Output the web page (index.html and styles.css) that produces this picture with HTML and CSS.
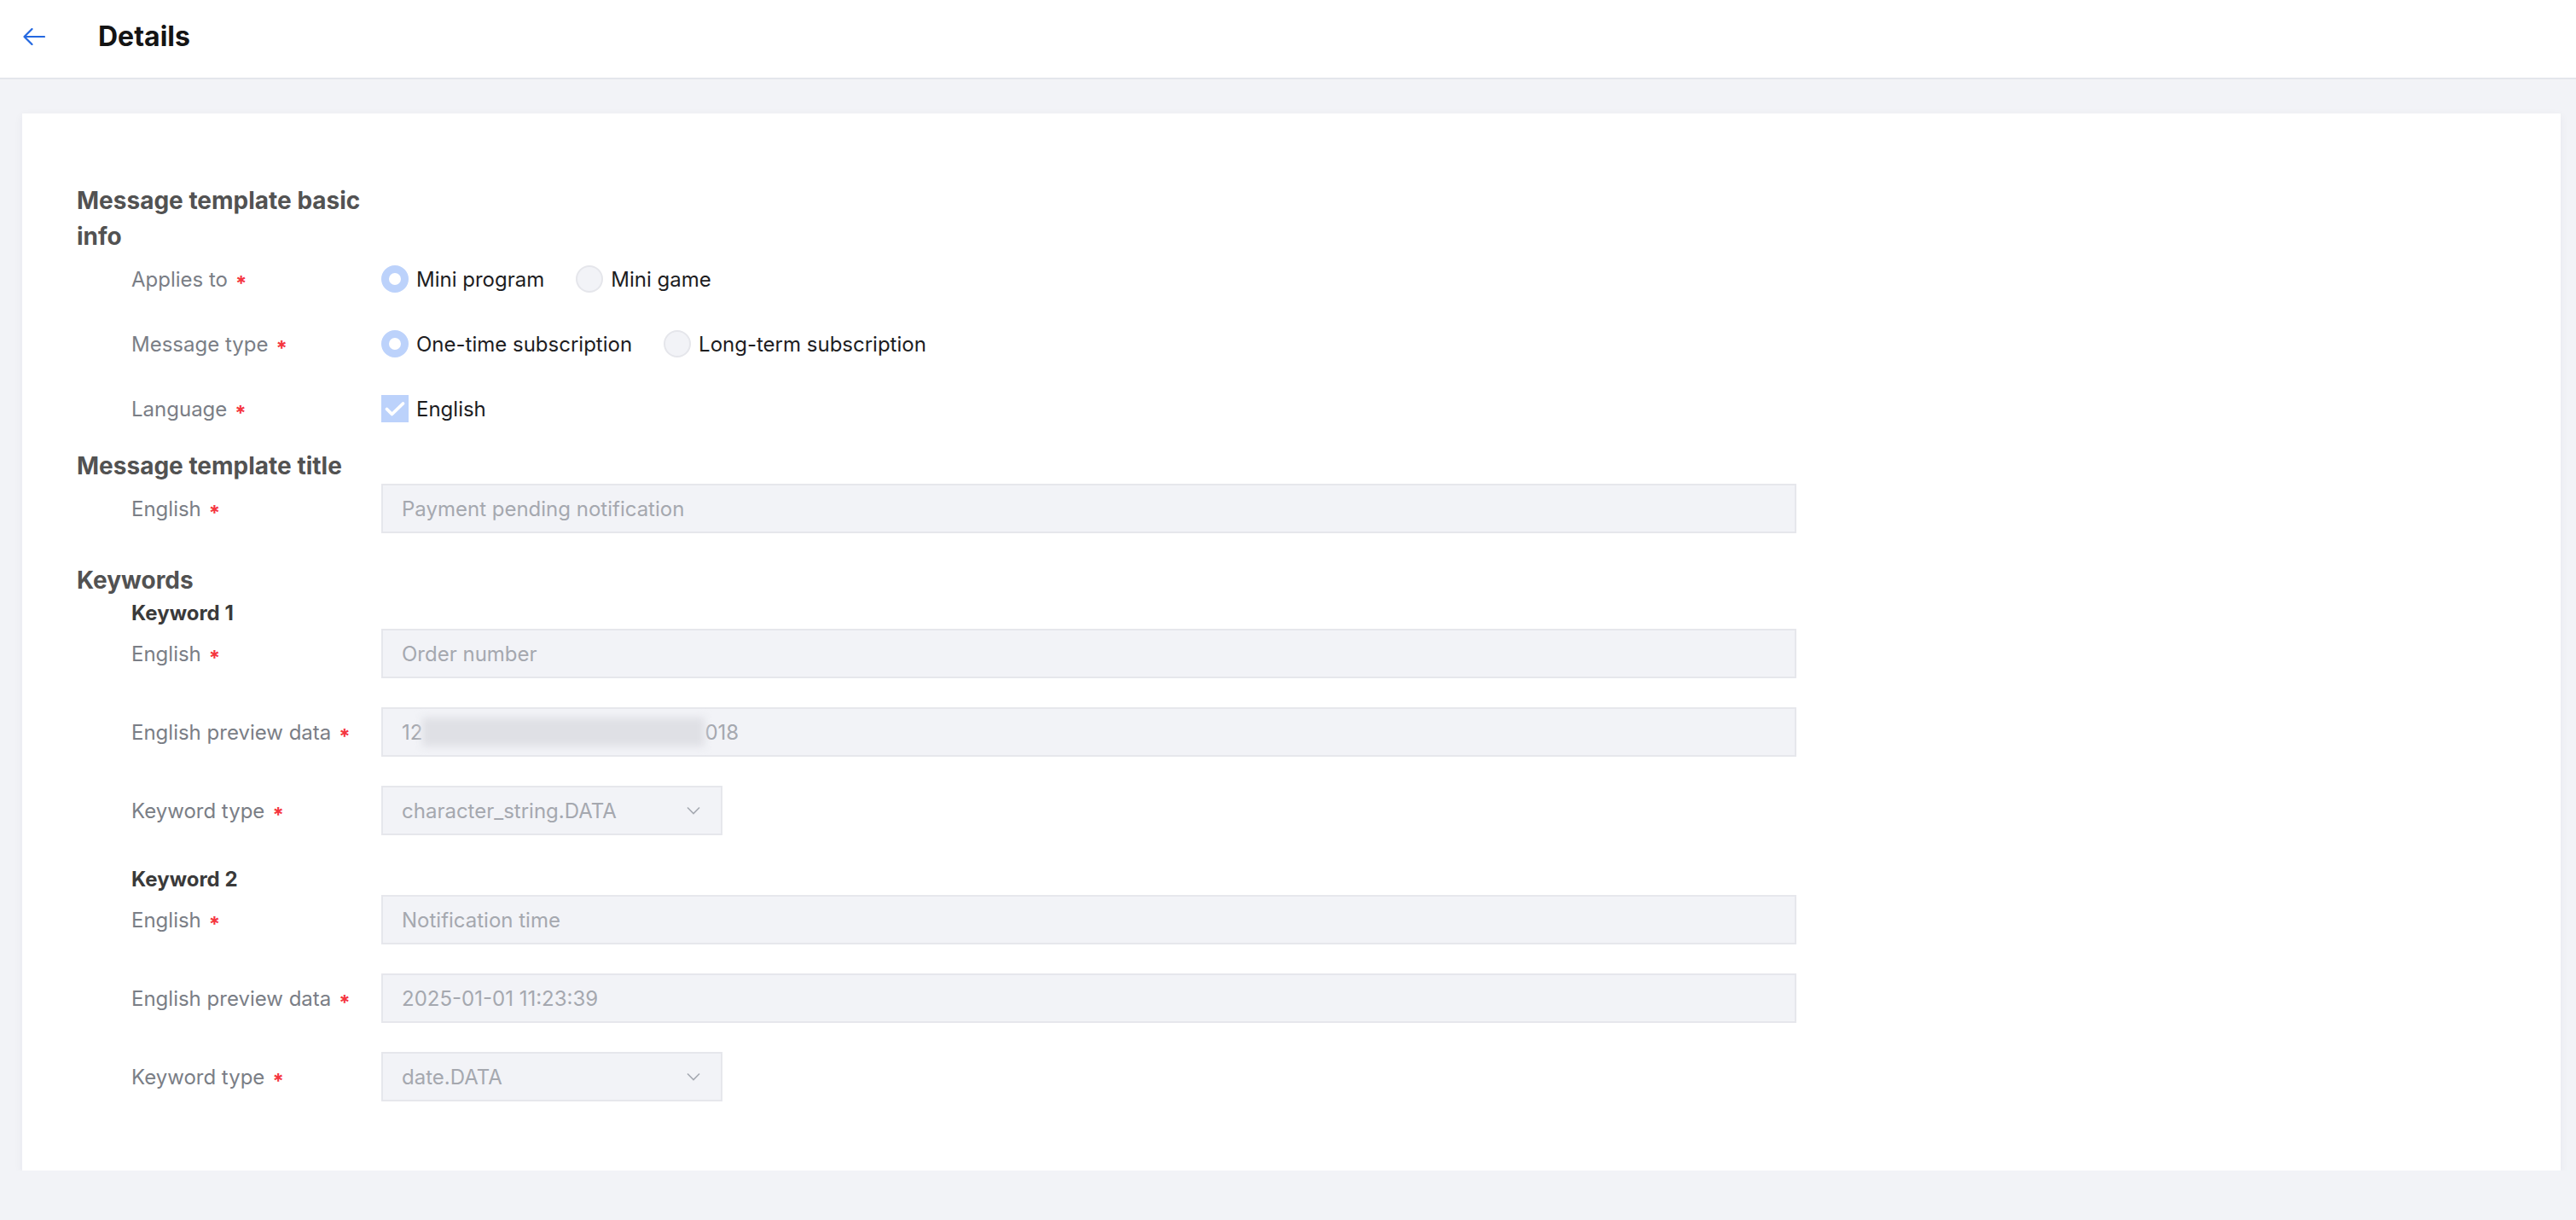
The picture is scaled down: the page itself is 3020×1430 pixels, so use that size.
FILE: index.html
```html
<!DOCTYPE html>
<html lang="en">
<head>
  <meta charset="UTF-8" />
  <title>Details</title>
  <meta name="viewport" content="width=device-width, initial-scale=1.0">
  <link rel="stylesheet" href="styles.css">
</head>
<body>
  <header class="topbar">
    <a class="back" href="#">
      <svg width="26" height="20" viewBox="0 0 26 20"><path d="M1.5 10H25M10.5 1L1.5 10l9 9" fill="none" stroke="#2468e0" stroke-width="2.2" stroke-linecap="round" stroke-linejoin="round"/></svg>
    </a>
    <h1>Details</h1>
  </header>

  <main class="card">
    <h2 class="group-title first">Message template basic info</h2>
    <div class="field choice">
      <div class="field-label">Applies to<span class="req">*</span></div>
      <div class="options">
        <span class="radio"><i class="dot on"></i>Mini program</span>
        <span class="radio"><i class="dot"></i>Mini game</span>
      </div>
    </div>
    <div class="field choice">
      <div class="field-label">Message type<span class="req">*</span></div>
      <div class="options">
        <span class="radio"><i class="dot on"></i>One-time subscription</span>
        <span class="radio"><i class="dot"></i>Long-term subscription</span>
      </div>
    </div>
    <div class="field choice last">
      <div class="field-label">Language<span class="req">*</span></div>
      <div class="options">
        <span class="radio"><i class="box"><svg width="32" height="32" viewBox="0 0 32 32"><path d="M6.5 16.5l6 6L25.5 10" fill="none" stroke="#fff" stroke-width="3.8" stroke-linecap="round" stroke-linejoin="round"/></svg></i>English</span>
      </div>
    </div>

    <h2 class="group-title">Message template title</h2>
    <div class="field">
      <div class="field-label">English<span class="req">*</span></div>
      <div class="input">Payment pending notification</div>
    </div>

    <h2 class="group-title">Keywords</h2>
    <h3 class="sub-title">Keyword 1</h3>
    <div class="field">
      <div class="field-label">English<span class="req">*</span></div>
      <div class="input">Order number</div>
    </div>
    <div class="field">
      <div class="field-label">English preview data<span class="req">*</span></div>
      <div class="input">12<span class="masked"></span>018</div>
    </div>
    <div class="field">
      <div class="field-label">Keyword type<span class="req">*</span></div>
      <div class="input select">character_string.DATA
        <svg width="16" height="10" viewBox="0 0 16 10"><path d="M1 1.5l7 7 7-7" fill="none" stroke="#a5a9b1" stroke-width="1.6"/></svg>
      </div>
    </div>

    <h3 class="sub-title">Keyword 2</h3>
    <div class="field">
      <div class="field-label">English<span class="req">*</span></div>
      <div class="input">Notification time</div>
    </div>
    <div class="field">
      <div class="field-label">English preview data<span class="req">*</span></div>
      <div class="input">2025-01-01 11:23:39</div>
    </div>
    <div class="field">
      <div class="field-label">Keyword type<span class="req">*</span></div>
      <div class="input select">date.DATA
        <svg width="16" height="10" viewBox="0 0 16 10"><path d="M1 1.5l7 7 7-7" fill="none" stroke="#a5a9b1" stroke-width="1.6"/></svg>
      </div>
    </div>
  </main>
</body>
</html>
```

FILE: styles.css
```css
body {
  margin: 0;
  font-family: Inter, "Noto Sans", sans-serif;
  background-color: #f2f3f7;
  color: #1d1d1f;
}

.topbar {
  height: 93px;
  background: #fff;
  border-bottom: 2px solid #e4e6ec;
  display: flex;
  align-items: center;
  padding: 0 0 6px 27px;
  box-sizing: border-box;
}
.back {
  display: flex;
  margin-right: 62px;
}
.topbar h1 {
  margin: 0;
  font-size: 32px;
  font-weight: 700;
  color: #141414;
}

.card {
  display: block;
  background: #fff;
  margin: 40px 18px 0 26px;
  padding: 81px 64px 47px;
  box-shadow: 0 3px 10px rgba(30, 40, 80, 0.06);
}

.group-title {
  margin: 0;
  max-width: 357px;
  font-size: 28px;
  line-height: 42px;
  font-weight: 700;
  color: #525252;
}
.group-title.first {
  margin-bottom: 8px;
}
.sub-title {
  margin: 0;
  padding-left: 64px;
  font-size: 24px;
  line-height: 36px;
  font-weight: 700;
  color: #3a3a3a;
}

.field {
  display: flex;
  align-items: center;
  margin-bottom: 34px;
}
.field.choice {
  height: 42px;
}
.field.choice.last {
  margin-bottom: 25px;
}
.field-label {
  width: 293px;
  margin-left: 64px;
  flex-shrink: 0;
  font-size: 24px;
  color: #7a7e86;
}
.req {
  position: relative;
  top: 5px;
  margin-left: 9px;
  font-size: 24px;
  line-height: 1;
  font-weight: 700;
  color: #f5363f;
}

.options {
  display: flex;
  align-items: center;
}
.radio {
  display: inline-flex;
  align-items: center;
  gap: 9px;
  margin-right: 37px;
  font-size: 24px;
  color: #1d1d1f;
}
.dot {
  width: 32px;
  height: 32px;
  border-radius: 50%;
  box-sizing: border-box;
  background: #f2f3f7;
  border: 2px solid #e5e6eb;
}
.dot.on {
  background: #fff;
  border: 9px solid #bcd2fb;
}
.box {
  display: flex;
  width: 32px;
  height: 32px;
  background: #bcd2fb;
}

.input {
  width: 1659px;
  height: 58px;
  box-sizing: border-box;
  border: 2px solid #e6e7ec;
  background: #f2f3f7;
  padding: 0 22px;
  display: flex;
  align-items: center;
  font-size: 24px;
  color: #a5a8af;
}
.input.select {
  width: 400px;
  justify-content: space-between;
  padding-right: 24px;
}
.masked {
  width: 331px;
  height: 34px;
  background: #dfe0e5;
  filter: blur(5px);
}
```
